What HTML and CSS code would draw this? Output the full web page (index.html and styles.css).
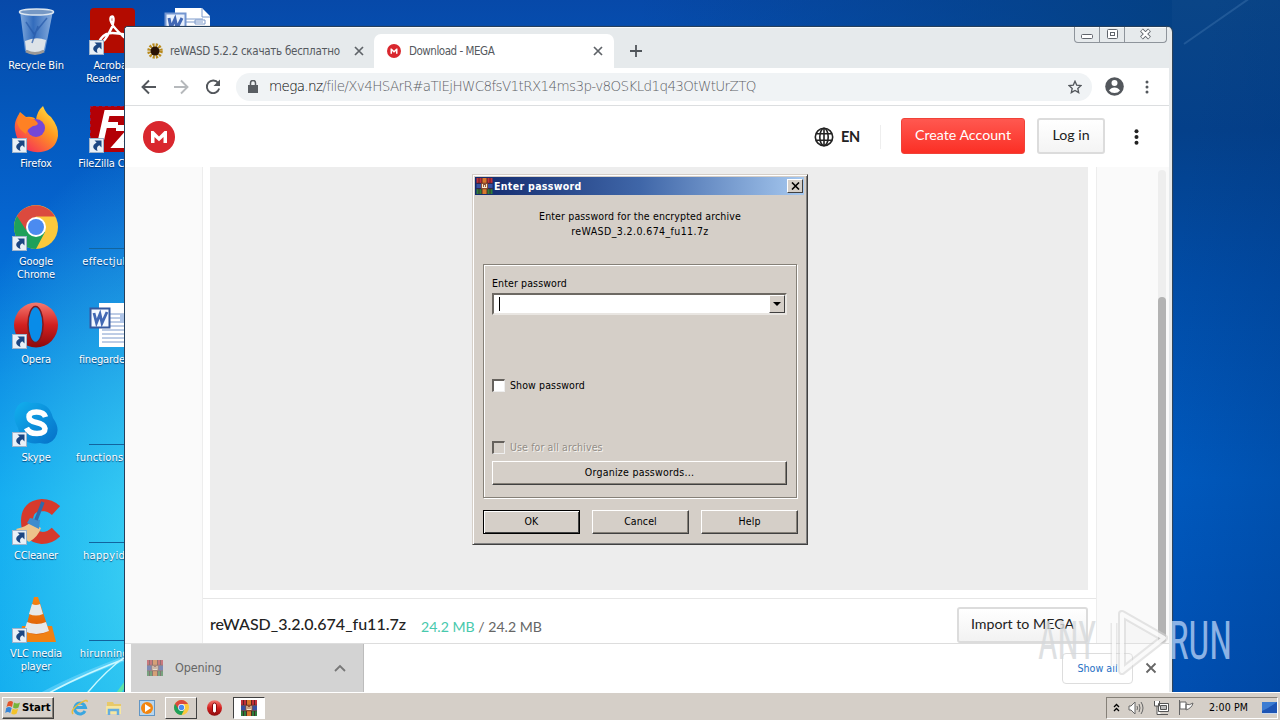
FILE: index.html
```html
<!DOCTYPE html>
<html lang="en">
<head>
<meta charset="utf-8">
<title>Desktop</title>
<link rel="stylesheet" href="styles.css">
</head>
<body>
<svg class="defs" width="0" height="0">
  <defs>
    <linearGradient id="red" x2="0" y2="1"><stop stop-color="#f47a70"/><stop offset=".5" stop-color="#d3201f"/><stop offset="1" stop-color="#8c0a0c"/></linearGradient>
    <linearGradient id="fox" x1="1" y1="0" x2=".2" y2="1"><stop stop-color="#fff04a"/><stop offset=".45" stop-color="#ff9a1f"/><stop offset="1" stop-color="#f5275c"/></linearGradient>
    <linearGradient id="sky" x2="1" y2="1"><stop stop-color="#12b0ee"/><stop offset="1" stop-color="#0570c8"/></linearGradient>
    <linearGradient id="bin" x2="1" y2="0"><stop stop-color="#9fc0e8"/><stop offset=".4" stop-color="#3e74c0"/><stop offset="1" stop-color="#a9c6ea"/></linearGradient>
    <symbol id="shortcut" viewBox="0 0 15 15"><rect x=".5" y=".5" width="14" height="14" fill="#e9f0f7" stroke="#9eb4cc"/><path d="M5.500 2.500h7V9.500L10.300 7.300C8 8.500 7.500 10 8.500 13 3.500 11.500 2.500 7.500 7.600 4.600z" fill="#1c4682"/></symbol>
    <symbol id="chrome" viewBox="0 0 44 44"><circle cx="22" cy="22" r="22" fill="#fbc93d"/><path d="M22 22 3 11A22 22 0 0 0 22 44l9-17z" fill="#1ea05a"/><path d="M3 11a22 22 0 0 1 38 .5H22L12 25z" fill="#db4a3e"/><circle cx="22" cy="22" r="10" fill="#fff"/><circle cx="22" cy="22" r="8" fill="#4b8bf0"/></symbol>
    <symbol id="opera" viewBox="0 0 44 46"><ellipse cx="22" cy="23" rx="22" ry="22.500" fill="url(#red)"/></symbol>
    <symbol id="rar" viewBox="0 0 16 16"><path fill="#c0303a" d="M0 0h16v5H0z"/><path fill="#3850a0" d="M0 5.500h16v5H0z"/><path fill="#2f7d3c" d="M0 11h16v5H0z"/><path fill="#d8782c" d="M5.500 0h5v5h-5zM5.500 11h5v5h-5z"/><path stroke="#441c20" stroke-width=".8" d="M0 5.300h16M0 10.700h16M2.500 0v5M13.500 0v5M2.500 11v5M13.500 11v5M5.500 0v5M10.500 0v5M5.500 11v5M10.500 11v5"/><rect x="4.500" y="5" width="7" height="6" rx="1" fill="#8c4c30"/><path d="M6 6v3.500h4V6M8 7v2.500" fill="none" stroke="#f6e8cc" stroke-width="1.100"/></symbol>
    <symbol id="mega" viewBox="0 0 32 32"><circle cx="16" cy="16" r="16" fill="#d9272e"/><path d="M8 22V10h2.500L16 15.500 21.500 10H24v12h-3.500v-6L16 20.200 11.500 16v6z" fill="#fff"/></symbol>
    <symbol id="word" viewBox="0 0 46 46"><path d="M10 1h27l8 8v36H10z" fill="#fff"/><path d="M13 12h28M13 16h28M13 20h28M13 24h28M13 28h28M13 32h28M13 36h28M13 40h28" stroke="#7d9acb"/><path d="M31 12h12v9H31z" fill="#afc5e8"/><rect x="1.500" y="6.500" width="19" height="19" fill="#f4f8ff" stroke="#36599f" stroke-width="2"/><path d="m5 11 2.500 10L11 12l2 9 5-11" fill="none" stroke="#4268b4" stroke-width="2.800"/></symbol>
    <linearGradient id="cone" x2="0" y2="1"><stop stop-color="#f88512"/><stop offset="1" stop-color="#d95c05"/></linearGradient>
  </defs>
</svg>

<div class="screen">
  <div class="wallpaper">
    <svg class="streaks" width="1280" height="692" fill="none">
      <path d="M38 697Q75 676 135 655" stroke="#7fdcff" stroke-width="5" opacity=".5"/>
      <path d="M42 697Q78 676 135 655M84 697Q104 672 126 656" stroke="#c8f8ff" stroke-width="1.500"/>
      <path d="M117 695 126 683" stroke="#5ee4a8" stroke-width="4"/>
      <path d="M1184 44 1250-2" stroke="#4c82b8" stroke-width="2" opacity=".35"/>
    </svg>
    <div class="icons">
      <div class="item"><svg class="pic" viewBox="0 0 48 48"><path d="m8 3 5 40q10 5 20 0L41 3z" fill="url(#bin)" opacity=".8"/><path d="m13 33 1 9q9 5 18 0l2-10q-10-4-21 1z" fill="#dde3e8"/><path d="m14 14 8 12 13-16M20 35l6-17" stroke="#2558a8" fill="none" stroke-width="1.500" opacity=".7"/><ellipse cx="24.500" cy="4" rx="17" ry="3" fill="#7698c4" stroke="#dce6f0" stroke-width="1.500"/><path d="M14 43q9 5 18 0" stroke="#9b9997" stroke-width="3" fill="none"/></svg><span>Recycle Bin</span></div>
      <div class="item"><svg class="pic" viewBox="0 0 48 48"><rect x="2" width="45" height="45" rx="4" fill="#b30b00"/><path d="M11 34C16 23 25 24 38 27c6 2 3 6-2 2C28 22 20 14 23 9c4-3 3 8-1 14-3 6-7 13-11 11z" stroke="#fff" stroke-width="2.500" fill="none"/><use href="#shortcut" x="1" y="32" width="15" height="15"/></svg><span>Acrobat<br>Reader DC</span></div>
      <div class="item"><svg class="pic" viewBox="0 0 48 48"><path d="M3 24C2 15 5 12 8 6l6 5q8-1 10 3Q25 5 31 0q3 8 8 11 8 10 7 19-2 14-17 16Q7 48 3 24z" fill="url(#fox)"/><circle cx="24" cy="22" r="9" fill="#7547d8"/><path d="M8 7l6 5q8 0 11 4 3 3-4 4-6 3-7 8-8-5-9-12z" fill="#ff8124"/><use href="#shortcut" y="32" width="15" height="15"/></svg><span>Firefox</span></div>
      <div class="item"><svg class="pic" viewBox="0 0 48 48"><path d="M2 0h46v46H2z" fill="#b30006"/><path d="M2 .5h46M2.500 0v46" stroke="#8a2050" stroke-dasharray="3 3"/><path d="m13 34 6-27h17M16 19h14M28 22h16L29 39h18" stroke="#fff" stroke-width="6" fill="none"/><use href="#shortcut" x="1" y="32" width="15" height="15"/></svg><span>FileZilla Client</span></div>
      <div class="item"><svg class="pic" viewBox="0 0 48 48"><use href="#chrome" x="2" y="1" width="44" height="44"/><use href="#shortcut" y="32" width="15" height="15"/></svg><span>Google<br>Chrome</span></div>
      <div class="item blank"><i></i><span>effectjul.rtf</span></div>
      <div class="item"><svg class="pic" viewBox="0 0 48 48"><use href="#opera" x="2" width="44" height="46"/><ellipse cx="23.500" cy="22.500" rx="7.500" ry="18" fill="#098ce8" stroke="#7c1a20" stroke-width="1.500"/><use href="#shortcut" y="32" width="15" height="15"/></svg><span>Opera</span></div>
      <div class="item"><svg class="pic" viewBox="0 0 48 48"><use href="#word" x="1" width="46" height="46"/></svg><span>finegarden.rtf</span></div>
      <div class="item"><svg class="pic" viewBox="0 0 48 48"><path d="M4 9Q9-1 19 3q18-2 22 15 8 11 2 20-6 8-15 5Q10 46 6 28 0 18 4 9z" fill="url(#sky)"/><path d="M33.500 17Q32 12 24.500 12T17 17q0 4 7.500 5.500t8.500 6q0 5-8 5T14.500 28" stroke="#fff" stroke-width="5.500" fill="none"/><use href="#shortcut" y="32" width="15" height="15"/></svg><span>Skype</span></div>
      <div class="item blank"><i></i><span>functionsof.rtf</span></div>
      <div class="item"><svg class="pic" viewBox="0 0 48 48"><path d="M44 12.500Q38 7 30 7 15 8 15 23t15 17q8 0 14-6" stroke="#d63a2c" stroke-width="12" fill="none"/><path d="M4 31q10-2 15-7l10 6q-3 9-12 14-7-5-13-13z" fill="#edc48c"/><path d="m18 20 10 2-1 9-12-6z" fill="#3e8cce"/><path d="m24 22 7-18" stroke="#3269a8" stroke-width="3.500"/><use href="#shortcut" y="32" width="15" height="15"/></svg><span>CCleaner</span></div>
      <div class="item blank"><i></i><span>happyid.rtf</span></div>
      <div class="item"><svg class="pic" viewBox="0 0 48 48"><path d="M10 30h30l4 16H7z" fill="#f08113"/><path d="M22 1h4l11 34q-12 7-24 0z" fill="url(#cone)"/><path d="m20 8-3 10q7 3 14 0L28 8q-4 2-8 0zM15 26l-3 9q12 6 25 0l-3-9q-9 4-19 0z" fill="#e7e8e9"/><use href="#shortcut" y="32" width="15" height="15"/></svg><span>VLC media<br>player</span></div>
      <div class="item blank"><i></i><span>hirunning.rtf</span></div>
    </div>
    <svg class="docpeek" viewBox="0 0 46 46" width="46" height="46"><path d="M11 0h27l9 9v37H11z" fill="#fff"/><path d="M38 0v9h8M14 11h25M14 14h25M31 12h10v4H31z" stroke="#7d9acb" fill="none"/><rect x="1.500" y="5.500" width="20" height="19" fill="#e8f0fc" stroke="#7395d0" stroke-width="2"/><path d="m5 10 2 10 4-9 2 9 5-10" fill="none" stroke="#4268b4" stroke-width="3"/></svg>
  </div>

  <div class="browser">
    <div class="tabs">
      <div class="tab"><svg width="16" height="16" viewBox="0 0 16 16"><circle cx="8" cy="8" r="6" stroke="#b98a1c" stroke-width="3.500" stroke-dasharray="2 1.140" fill="none"/><circle cx="8" cy="8" r="4.500" fill="#2b1405"/></svg><span class="t1">reWASD 5.2.2 скачать бесплатно</span><svg width="10" height="10"><path d="m1 1 8 8M9 1 1 9" stroke="#5f6368" stroke-width="1.700"/></svg></div>
      <div class="tab active"><svg width="14" height="14"><use href="#mega"/></svg><span class="t2">Download - MEGA</span><svg width="10" height="10"><path d="m1 1 8 8M9 1 1 9" stroke="#5f6368" stroke-width="1.700"/></svg></div>
      <svg class="plus" width="12" height="12"><path d="M6 0v12M0 6h12" stroke="#50555a" stroke-width="1.800"/></svg>
      <div class="winbtns">
        <svg width="24" height="15"><rect x="6.500" y="7.500" width="11" height="4" rx="1" fill="#fff" stroke="#60656c"/></svg>
        <svg width="25" height="15"><rect x="7.500" y="2.500" width="10" height="9" rx="1" fill="#fff" stroke="#60656c"/><rect x="10.500" y="5.500" width="4" height="3" fill="#fff" stroke="#60656c"/></svg>
        <svg width="42" height="15"><path d="m16.500 3 8 8M24.500 3l-8 8" stroke="#60656c" stroke-width="4"/><path d="m16.900 3.400 7.200 7.200M24.100 3.400l-7.200 7.200" stroke="#fff" stroke-width="2.400"/></svg>
      </div>
    </div>
    <div class="toolbar">
      <svg width="16" height="16" fill="none" stroke="#53575c" stroke-width="1.900"><path d="M15 8H2M8 1.500 1.500 8 8 14.500"/></svg>
      <svg width="16" height="16" fill="none" stroke="#b6b9bc" stroke-width="1.900"><path d="M1 8h13M8 1.500 14.500 8 8 14.500"/></svg>
      <svg width="16" height="16" fill="none" stroke="#53575c" stroke-width="1.900"><path d="M13.200 4A6.300 6.300 0 1 0 14.200 9.500"/><path d="M15 .5v6.500H8.500z" fill="#53575c" stroke="none"/></svg>
      <div class="omnibox">
        <svg width="10" height="13"><path d="M0 5h10v8H0z" fill="#5a5e63"/><path d="M2.500 5V3a2.500 2.500 0 0 1 5 0v2" fill="none" stroke="#5a5e63" stroke-width="1.500"/></svg>
        <span class="url"><b>mega.nz</b>/file/Xv4HSArR#aTIEjHWC8fsV1tRX14ms3p-v8OSKLd1q43OtWtUrZTQ</span>
        <svg width="14" height="14" viewBox="0 0 14 14"><path d="m7 1.200 1.700 3.900 4.300.4-3.200 2.900.9 4.200L7 10.400l-3.700 2.200.9-4.200L1 5.500l4.300-.4z" fill="none" stroke="#53575c" stroke-width="1.300"/></svg>
      </div>
      <svg class="user" width="19" height="19"><circle cx="9.500" cy="9.500" r="9.300" fill="#53575c"/><circle cx="9.500" cy="6" r="3" fill="#fff"/><path d="M4 13.500q2-3 5.500-3t5.500 3q-2 2.500-5.500 2.500T4 13.500" fill="#fff"/></svg>
      <svg class="more" width="4" height="14" fill="#53575c"><circle cx="2" cy="2" r="1.500"/><circle cx="2" cy="7" r="1.500"/><circle cx="2" cy="12" r="1.500"/></svg>
    </div>
    <div class="site">
      <svg width="32" height="32"><use href="#mega"/></svg>
      <svg class="globe" width="20" height="20" fill="none" stroke="#222" stroke-width="1.600"><circle cx="10" cy="10" r="8.700"/><ellipse cx="10" cy="10" rx="4.200" ry="8.700"/><path d="M2 6.800h16M2 13.200h16M10 1v18"/></svg>
      <span class="lang">EN</span>
      <i class="sep"></i>
      <span class="create">Create Account</span>
      <span class="login">Log in</span>
      <svg class="sitemore" width="5" height="16" fill="#222"><circle cx="2.500" cy="2.300" r="2"/><circle cx="2.500" cy="8" r="2"/><circle cx="2.500" cy="13.700" r="2"/></svg>
    </div>
    <div class="page">
      <div class="card">
        <div class="preview"></div>
        <div class="file">
          <span class="name">reWASD_3.2.0.674_fu11.7z</span>
          <span class="size"><em>24.2 MB</em> / 24.2 MB</span>
          <span class="import">Import to MEGA</span>
        </div>
      </div>
      <div class="track"><div class="thumb"></div></div>
    </div>
    <div class="shelf">
      <div class="download"><svg width="16" height="16" opacity=".55"><use href="#rar"/></svg><span>Opening</span><svg width="12" height="8"><path d="M1 7 6 2l5 5" fill="none" stroke="#777" stroke-width="1.800"/></svg></div>
      <span class="showall">Show all</span>
      <svg width="12" height="12"><path d="m1.500 1.500 9 9M10.500 1.500l-9 9" stroke="#666" stroke-width="1.800"/></svg>
    </div>
  </div>

  <div class="dialog">
    <div class="title"><svg width="18" height="16"><use href="#rar" width="17" height="16"/></svg><b>Enter password</b><span class="close"><svg width="9" height="8"><path d="m1 .5 7 7M8 .5l-7 7" stroke="#000" stroke-width="1.600"/></svg></span></div>
    <p class="message">Enter password for the encrypted archive<br><span>reWASD_3.2.0.674_fu11.7z</span></p>
    <div class="group">
      <label>Enter password</label>
      <div class="combo"><i class="caret"></i><span class="drop"><svg width="8" height="4"><path d="M0 0h8L4 4z"/></svg></span></div>
      <div class="check"><i class="box"></i><span>Show password</span></div>
      <div class="check disabled"><i class="box"></i><span>Use for all archives</span></div>
      <div class="button organize">Organize passwords...</div>
    </div>
    <div class="actions"><div class="button default">OK</div><div class="button">Cancel</div><div class="button">Help</div></div>
  </div>

  <div class="taskbar">
    <div class="start"><svg width="16" height="16"><path d="M3 2q3-2 5 0L7 7Q4 5 1.500 7z" fill="#e2552b"/><path d="M9 2.500q3 2 6 0l-1.500 5q-3 2-5.500 0z" fill="#76b53a"/><path d="M1.200 8Q4 6 6.700 8l-1.500 5q-2.500-2-5 0z" fill="#3686d8"/><path d="M7.700 8.500q3 2 5.500 0l-1.500 5q-3 2-5.500 0z" fill="#f3c32a"/></svg><b>Start</b></div>
    <div class="quick">
      <svg width="18" height="18" viewBox="0 0 18 18"><path d="M14 12A5.500 5.500 0 1 1 14.500 8.500H4" fill="none" stroke="#3aa6e0" stroke-width="3"/><path d="M2 15Q-1 11 8 5t8-2" stroke="#e9bd3c" stroke-width="1.500" fill="none"/></svg>
      <svg width="18" height="18" viewBox="0 0 18 18"><path d="M2 3h6l1 2h7v10H2z" fill="#e8c968"/><path d="M1 7h15v8H1z" fill="#f7e6a0"/><path d="M4 16v-5h9v5" fill="none" stroke="#67aede" stroke-width="2.500"/></svg>
      <svg width="16" height="16"><rect x=".5" y=".5" width="15" height="15" fill="#b8d6ee" stroke="#6296c4"/><circle cx="8" cy="8" r="6" fill="#f3860f"/><path d="m6 4 6 4-6 4z" fill="#fff"/></svg>
      <span class="task"><svg width="15" height="15"><use href="#chrome"/></svg></span>
      <svg width="15" height="16"><use href="#opera" width="15" height="16"/><rect x="5.500" y="3" width="4" height="10" rx="2" fill="#fff" stroke="#8c0a0c"/></svg>
      <span class="task pressed"><svg width="16" height="16"><use href="#rar"/></svg></span>
    </div>
    <div class="tray">
      <svg width="7" height="10" fill="none" stroke="#000" stroke-width="1.300"><path d="M1 4l2.500-2.500L6 4M1 8l2.500-2.500L6 8"/></svg>
      <svg width="17" height="14" fill="none" stroke="#666"><path d="M1 5h2l4-4v12L3 9H1z" fill="#fff"/><path d="M9 5q1 2 0 4M11 3q2 4 0 8M13 1q4 6 0 12"/></svg>
      <svg width="17" height="16" fill="#fff" stroke="#555"><path d="M5.500 3.500h10v8h-10zM7 14.500h8M1.500 1v5h5V1M4 6v8.500h4"/><path d="M7.500 5.500h6v4h-6z" fill="#bbb"/></svg>
      <svg width="17" height="15" fill="#fff" stroke="#666"><path d="M1.500 0v15M2 2h6v7H2zM8 4q3 2 7-1-1 5-7 7z"/></svg>
      <span class="clock">2:00 PM</span>
      <svg width="15" height="12"><rect width="15" height="11" fill="#1e55b4"/><path d="M0 0h15L6 6 0 9z" fill="#3c7cd2"/><path d="M0 11.500h15" stroke="#c8d8ec"/></svg>
    </div>
  </div>

  <svg class="watermark" width="200" height="76">
    <g font-family="Roboto" font-weight="400" font-size="53" fill="#d6d9db">
      <text x="2" y="48" textLength="58" lengthAdjust="spacingAndGlyphs" opacity=".8">ANY</text>
      <text x="133" y="48" textLength="63" lengthAdjust="spacingAndGlyphs" fill="#cfe2ff" opacity=".68">RUN</text>
    </g>
    <path d="M86 3v57M86 3l42 24-42 33z" fill="#eee" fill-opacity=".4" stroke="#d4d4d4" stroke-width="8" stroke-linejoin="round" opacity=".6"/>
    <path d="M78 12v43" fill="none" stroke="#d4d4d4" stroke-width="7" opacity=".5"/>
    <path d="M86 3 128 27 86 60zM78 12v43" fill="none" stroke="#fff" stroke-width="4" stroke-linejoin="round" opacity=".8"/>
  </svg>
</div>
</body>
</html>
```
FILE: styles.css
```css
* { box-sizing: border-box; }
body { margin: 0; overflow: hidden; font: 11px/13px "DejaVu Sans Condensed", "DejaVu Sans", sans-serif; font-stretch: condensed; color: #000; }
svg { display: block; flex: none; }
i { display: block; font-style: normal; }
span { white-space: nowrap; }
.defs { position: absolute; }
.screen { position: relative; width: 1280px; height: 720px; display: flex; flex-direction: column; overflow: hidden; }

.wallpaper {
  position: relative; height: 692px; flex: none;
  background:
    radial-gradient(ellipse 260px 430px at 190px 560px, rgba(90,235,245,.75), rgba(40,190,250,0)) no-repeat,
    linear-gradient(90deg, transparent 50%, rgba(4,64,130,.95) 92%),
    linear-gradient(#0749a9 0, #0455b8 90px, #0565d0 220px, #0688e4 380px, #06a0f0 500px, #08a4ee 692px);
}
.wallpaper::after { content: ""; position: absolute; left: 1172px; top: 0; width: 108px; height: 692px; background: linear-gradient(98deg, transparent 20%, rgba(0,50,120,.3)), linear-gradient(#0a4587 0, #04408a 130px, #014ca6 280px, #005bc1 480px, #0052b8 692px); z-index: 0; }
.streaks, .docpeek, .browser, .dialog, .watermark { position: absolute; }
.streaks { left: 0; top: 0; z-index: 1; }
.docpeek { left: 164px; top: 8px; }
.icons { position: absolute; left: -2px; top: 8px; display: grid; grid-template-columns: 76px 76px; grid-auto-rows: 98px; }
.item { display: flex; flex-direction: column; align-items: center; color: #fff; text-align: center; text-shadow: 0 1px 1px rgba(0,30,80,.7); letter-spacing: -.13px; z-index: 2; }
.item .pic { width: 48px; height: 48px; margin-bottom: 3px; }
.blank i { width: 46px; height: 45px; margin: 0 0 6px; border-bottom: 1px solid #12649e; }
.blank span { letter-spacing: .2px; }
.blank:nth-child(6) span, .blank:nth-child(12) span { letter-spacing: .35px; }

.browser { left: 124px; top: 26px; width: 1048px; height: 666px; display: flex; flex-direction: column; border: 1px solid #26405c; border-width: 1px 0 0 1px; border-radius: 4px 6px 0 0; border-right: 3px solid #e6e9eb; background: #fff; box-shadow: 1px 0 1px #345; z-index: 3; }
.tabs { height: 41px; display: flex; align-items: flex-end; background: #e6eaec; border-top: 1px solid #f7fafb; border-radius: 3px 4px 0 0; color: #55595e; font-size: 11.500px; }
.tab { width: 249px; height: 34px; display: flex; align-items: center; padding-left: 22px; padding-right: 10px; }
.tab .t1 { margin-left: 7px; flex: 1; letter-spacing: -.27px; }
.tab.active { width: 240px; padding-left: 13px; padding-right: 11px; border-radius: 7px 7px 0 0; background: #fff; }
.tab .t2 { margin-left: 8px; flex: 1; letter-spacing: -.47px; }
.plus { margin: 0 0 11px 16px; }
.winbtns { align-self: flex-start; margin: -1px 2px 0 auto; display: flex; border: 1px solid #8e949b; border-top: 0; border-radius: 0 0 4px 4px; overflow: hidden; }
.winbtns svg + svg { border-left: 1px solid #8e949b; }
.toolbar { height: 38px; display: flex; align-items: center; padding-left: 16px; border-bottom: 1px solid #dcdee0; }
.toolbar > svg + svg { margin-left: 16px; }
.omnibox { width: 856px; height: 28px; margin-left: 15px; border-radius: 14px; background: #f0f3f5; display: flex; align-items: center; padding: 0 10px 0 12px; }
.url { margin-left: 11px; flex: 1; font-size: 13.500px; letter-spacing: -.63px; color: #5d6165; font-family: "DejaVu Sans Light", "DejaVu Sans", sans-serif; font-weight: 200; font-stretch: normal; }
.url b { font-weight: 200; color: #000; }
.toolbar > svg.user { margin-left: 13px; }
.toolbar > svg.more { margin-left: 21px; }
.site { height: 61px; display: flex; align-items: center; padding: 1px 28px 0 18px; color: #222; font: 14.500px/20px Lato, sans-serif; }
.globe { margin-left: 639px; }
.lang { margin-left: 7px; width: 20px; font-weight: 700; letter-spacing: -.3px; }
.sep { width: 1px; height: 24px; margin-left: 19px; background: #eee; }
.create { width: 124px; height: 36px; margin: -3px 0 0 20px; border-radius: 3px; background: linear-gradient(#ff5850, #fb2f25); border: 1px solid #f04238; color: #fff; text-align: center; line-height: 32px; font-size: 14.200px; }
.login { width: 68px; height: 36px; margin: -3px 0 0 12px; border: 2px solid #dcdcdc; border-radius: 3px; background: linear-gradient(#fff, #f4f4f4); text-align: center; line-height: 30px; font-size: 14.200px; }
.sitemore { margin-left: 29px; }
.page { height: 476px; display: flex; background: #fafafa; padding-left: 77px; }
.card { width: 895px; border: 1px solid #ededed; border-width: 0 1px; background: #fff; }
.preview { height: 423px; width: 878px; margin-left: 7px; background: #ededed; }
.file { height: 45px; margin-top: 8px; border-top: 1px solid #e6e6e6; display: flex; padding-left: 7px; font: 15px/20px Lato, sans-serif; color: #666; }
.name { color: #222; font-size: 16px; padding-top: 15px; width: 211px; font-weight: 500; }
.size { padding-top: 18px; font-size: 14.100px; }
.size em { font-style: normal; color: #48c9ad; }
.import { width: 131px; height: 36px; margin: 8px 8px 0 auto; border: 2px solid #dcdcdc; border-radius: 3px; background: linear-gradient(#fff, #f2f2f2); color: #222; text-align: center; line-height: 30px; font-size: 14.200px; }
.track { width: 8px; height: 473px; margin: 3px 3px 0 auto; background: #eee; border-radius: 4px 4px 0 0; }
.thumb { height: 346px; margin-top: 127px; background: #b3b3b3; border-radius: 4px; }
.shelf { height: 49px; display: flex; align-items: center; padding: 0 12px 0 6px; border-top: 1px solid #ddd; background: #fff; }
.download { width: 233px; height: 48px; display: flex; align-items: center; padding: 0 17px 0 16px; background: #d3d3d3; border-right: 1px solid #bcbcbc; color: #666; font-size: 12.500px; }
.download span { margin: -2px 0 0 12px; flex: 1; letter-spacing: -.15px; }
.showall { margin: 0 12px 0 auto; width: 71px; height: 31px; border: 1px solid #ddd; border-radius: 4px; color: #2670c4; text-align: center; line-height: 29px; font-size: 10.700px; }

.dialog { left: 472px; top: 174px; width: 336px; height: 371px; padding: 3px; background: #d5cfc8; border: 1px solid; border-color: #d5cfc8 #404040 #404040 #d5cfc8; box-shadow: inset 1px 1px #fff, inset -1px -1px #808080; font-size: 10.500px; letter-spacing: .12px; z-index: 4; }
.title { height: 18px; display: flex; align-items: center; padding: 0 1px; margin: -1px 0 0 -1px; background: linear-gradient(90deg, #12296c, #3f66a8 50%, #a6c8ef); color: #fff; }
.title b { flex: 1; letter-spacing: .33px; }
.close, .drop { display: flex; align-items: center; justify-content: center; background: #d5cfc8; border: 1px solid; border-color: #fff #404040 #404040 #fff; }
.close { width: 16px; height: 14px; }
.message { height: 55px; margin: 14px 0 0; text-align: center; line-height: 15px; letter-spacing: .14px; }
.message span { letter-spacing: .4px; }
.group { width: 314px; height: 234px; margin-left: 7px; border: 1px solid #858078; box-shadow: 1px 1px #fff, inset 1px 1px #fff; display: flex; flex-direction: column; padding: 12px 9px 0 8px; }
.combo { height: 22px; margin-top: 3px; width: 295px; background: #fff; border: 2px solid; border-color: #6d6963 #e9e6e2 #e9e6e2 #6d6963; display: flex; align-items: center; }
.caret { width: 1px; height: 14px; background: #000; margin: 0 auto 0 5px; }
.drop { width: 16px; height: 18px; }
.check { height: 13px; display: flex; align-items: center; gap: 5px; margin-top: 64px; }
.check.disabled { margin-top: 49px; color: #928d86; text-shadow: 1px 1px #f7f5f2; }
.check > .box { width: 13px; height: 13px; background: #fff; border: 1px solid; border-width: 2px 1px 1px 2px; border-color: #65615c #eee #eee #65615c; }
.check.disabled > .box { background: #d5cfc8; }
.button { width: 97px; height: 24px; border: 1px solid; border-color: #fff #404040 #404040 #fff; box-shadow: inset -1px -1px #858078; text-align: center; line-height: 21px; }
.organize { width: 295px; margin-top: 7px; letter-spacing: .25px; }
.actions { display: flex; justify-content: space-between; margin: 12px 6px 0 7px; }
.default { border-color: #000; box-shadow: inset 1px 1px #fff, inset -1px -1px #404040; }

.taskbar { height: 28px; flex: none; display: flex; align-items: center; background: #d5cfc8; border-top: 1px solid #fff; padding: 2px 2px 0; z-index: 4; }
.start { width: 52px; height: 22px; display: flex; align-items: center; gap: 1px; padding-left: 2px; border: 1px solid; border-color: #fff #404040 #404040 #fff; box-shadow: inset -1px -1px #858078; font-size: 11.300px; letter-spacing: -.1px; }
.quick { display: flex; align-items: center; margin-left: 17px; gap: 16px; }
.quick .task { width: 32px; height: 22px; margin-left: -6px; margin-right: -6px; display: flex; align-items: center; justify-content: center; border: 1px solid; border-color: #fff #404040 #404040 #fff; }
.quick .pressed { background: #fff; border-color: #404040 #fff #fff #404040; margin-left: -5px; }
.tray { width: 172px; height: 22px; margin-left: auto; border: 1px solid; border-color: #858078 #fff #fff #858078; display: flex; align-items: center; gap: 8px; padding-left: 6px; }
.clock { margin: 0 auto 0 6px; font-size: 10.500px; letter-spacing: .15px; }
.watermark { left: 1036px; top: 611px; z-index: 5; pointer-events: none; overflow: visible; }
```
